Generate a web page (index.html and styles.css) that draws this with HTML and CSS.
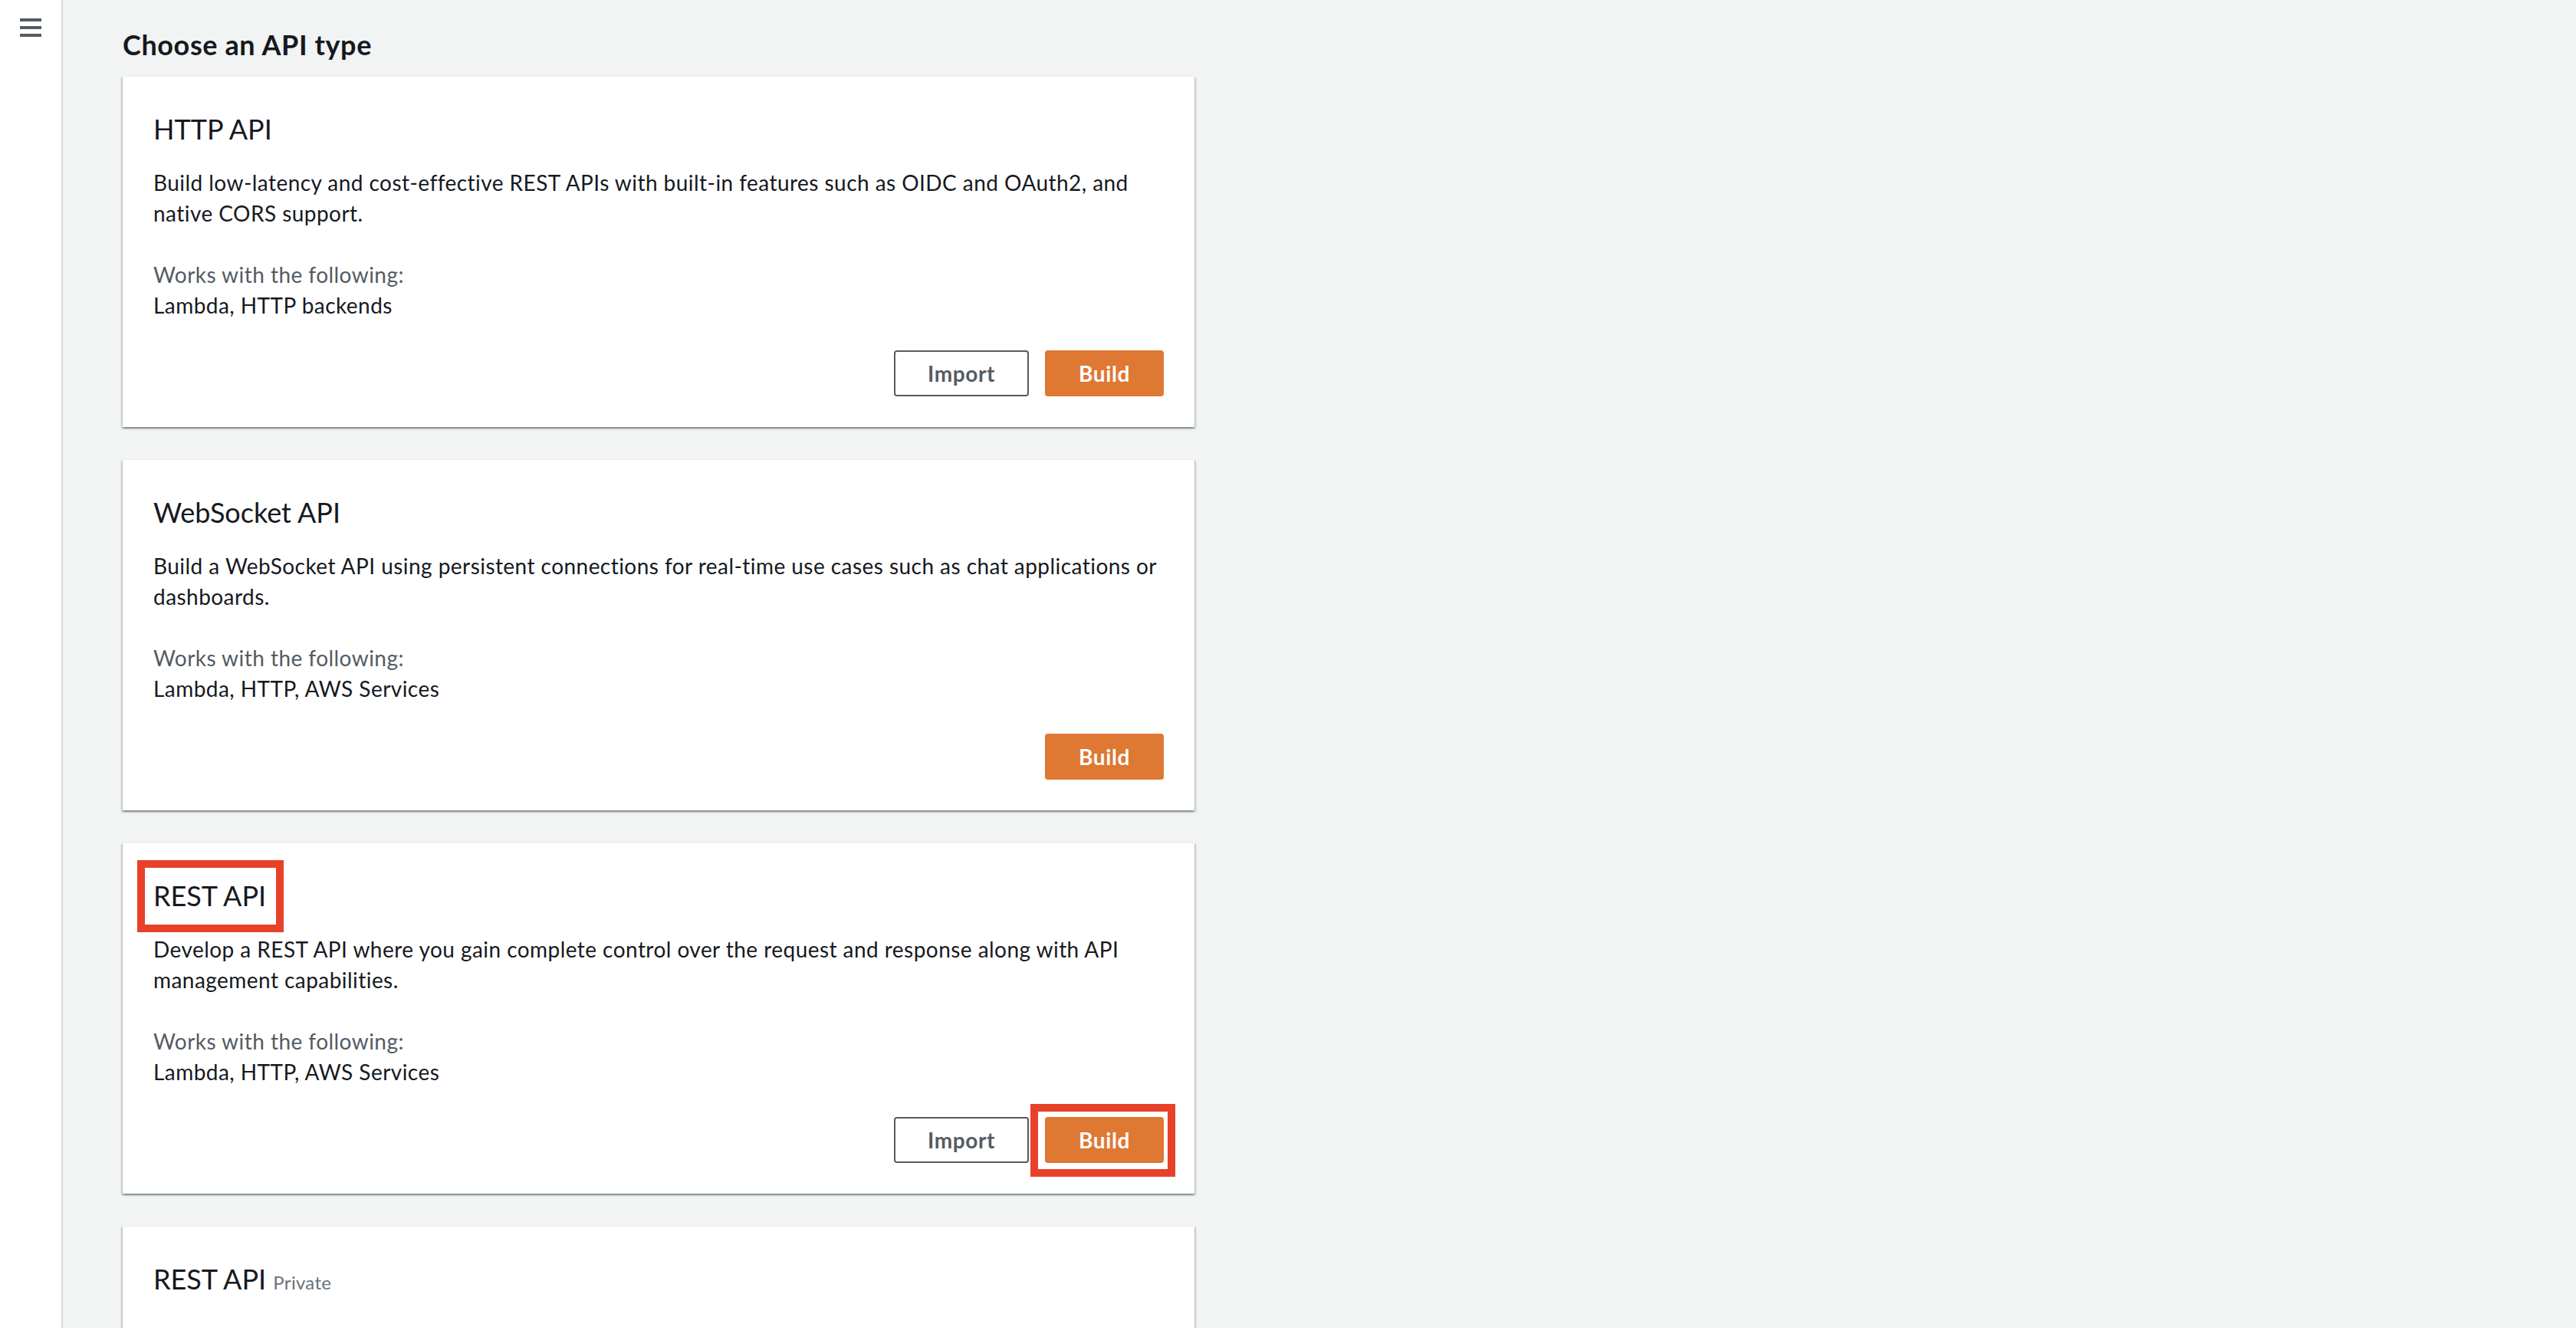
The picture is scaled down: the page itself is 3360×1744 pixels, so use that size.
FILE: index.html
```html
<!DOCTYPE html>
<html lang="en">
<head>
    <meta charset="UTF-8">
    <meta name="viewport" content="width=device-width, initial-scale=1.0">
    <title>API Gateway - Choose an API type</title>
    <link rel="stylesheet" href="styles.css">
</head>
<body>
    <div class="app">
        <nav class="sidebar">
            <button class="menu" aria-label="Open navigation">
                <svg width="28" height="24" viewBox="0 0 28 24">
                    <rect x="0" y="0" width="28" height="4" fill="#545b64"/>
                    <rect x="0" y="10" width="28" height="4" fill="#545b64"/>
                    <rect x="0" y="20" width="28" height="4" fill="#545b64"/>
                </svg>
            </button>
        </nav>

        <main class="main">
            <h1>Choose an API type</h1>

            <div class="cards">
                <section class="card">
                    <h2>HTTP API</h2>
                    <p class="desc">Build low-latency and cost-effective REST APIs with built-in features such as OIDC and OAuth2, and native CORS support.</p>
                    <p class="label">Works with the following:</p>
                    <p class="value">Lambda, HTTP backends</p>
                    <div class="actions">
                        <button class="btn">Import</button>
                        <button class="btn btn-primary">Build</button>
                    </div>
                </section>

                <section class="card">
                    <h2>WebSocket API</h2>
                    <p class="desc">Build a WebSocket API using persistent connections for real-time use cases such as chat applications or dashboards.</p>
                    <p class="label">Works with the following:</p>
                    <p class="value">Lambda, HTTP, AWS Services</p>
                    <div class="actions">
                        <button class="btn btn-primary">Build</button>
                    </div>
                </section>

                <section class="card">
                    <h2><span class="mark mark-title">REST API</span></h2>
                    <p class="desc">Develop a REST API where you gain complete control over the request and response along with API management capabilities.</p>
                    <p class="label">Works with the following:</p>
                    <p class="value">Lambda, HTTP, AWS Services</p>
                    <div class="actions">
                        <button class="btn">Import</button>
                        <span class="mark mark-btn"><button class="btn btn-primary">Build</button></span>
                    </div>
                </section>

                <section class="card card-cut">
                    <h2>REST API <small>Private</small></h2>
                </section>
            </div>
        </main>
    </div>
</body>
</html>
```

FILE: styles.css
```css
body {
    margin: 0;
    background: #fff;
    font-family: Lato, "Noto Sans", sans-serif;
    color: #16191f;
}

.app {
    display: flex;
    height: 1732px;
    overflow: hidden;
}

.sidebar {
    width: 80px;
    flex-shrink: 0;
    background: #fff;
    border-right: 2px solid #d5dbdb;
    padding-top: 24px;
    display: flex;
    justify-content: center;
    align-items: flex-start;
}

.menu {
    border: 0;
    padding: 0;
    background: none;
    display: block;
    line-height: 0;
}

.main {
    flex: 1;
    background: #f2f3f3;
    padding: 36px 0 0 78px;
    overflow: hidden;
}

h1 {
    margin: 0 0 19px;
    font-size: 36px;
    line-height: 44px;
    font-weight: 700;
    letter-spacing: 0.6px;
}

.cards {
    width: 1398px;
    display: flex;
    flex-direction: column;
    gap: 42px;
}

.card {
    background: #fff;
    padding: 0 40px 40px;
    box-shadow: 0 2px 2px 0 rgba(0, 28, 36, 0.3),
                2px 2px 2px 0 rgba(0, 28, 36, 0.15),
                -2px 2px 2px 0 rgba(0, 28, 36, 0.15);
    border-top: 1px solid #eaeded;
}

.card-cut {
    height: 400px;
}

.card h2 {
    margin: 0;
    padding-top: 39px;
    font-size: 36px;
    line-height: 58px;
    font-weight: 400;
}

.card h2 small {
    font-size: 24px;
    color: #687078;
    letter-spacing: 0.3px;
}

.card p {
    margin: 0;
    font-size: 28px;
    line-height: 40px;
    letter-spacing: 0.45px;
}

.desc {
    padding-top: 21px;
}

.label {
    color: #545b64;
    padding-top: 40px;
}

.actions {
    display: flex;
    justify-content: flex-end;
    gap: 21px;
    padding-top: 39px;
}

.btn {
    height: 60px;
    padding: 0 42px;
    border: 2px solid #545b64;
    border-radius: 4px;
    background: #fff;
    color: #545b64;
    font-family: inherit;
    font-size: 28px;
    font-weight: 700;
    letter-spacing: 0.6px;
}

.btn-primary {
    background: #de7833;
    border-color: #de7833;
    color: #fff;
}

/* red annotation boxes drawn over the screenshot */
.mark {
    position: relative;
    display: inline-block;
}

.mark::after {
    content: "";
    position: absolute;
    border: 10px solid #e8412a;
}

.mark-title::after {
    top: -17px;
    bottom: -19px;
    left: -21px;
    right: -23px;
}

.mark-btn .btn {
    display: block;
}

.mark-btn::after {
    top: -17px;
    bottom: -18px;
    left: -19px;
    right: -15px;
}
```
